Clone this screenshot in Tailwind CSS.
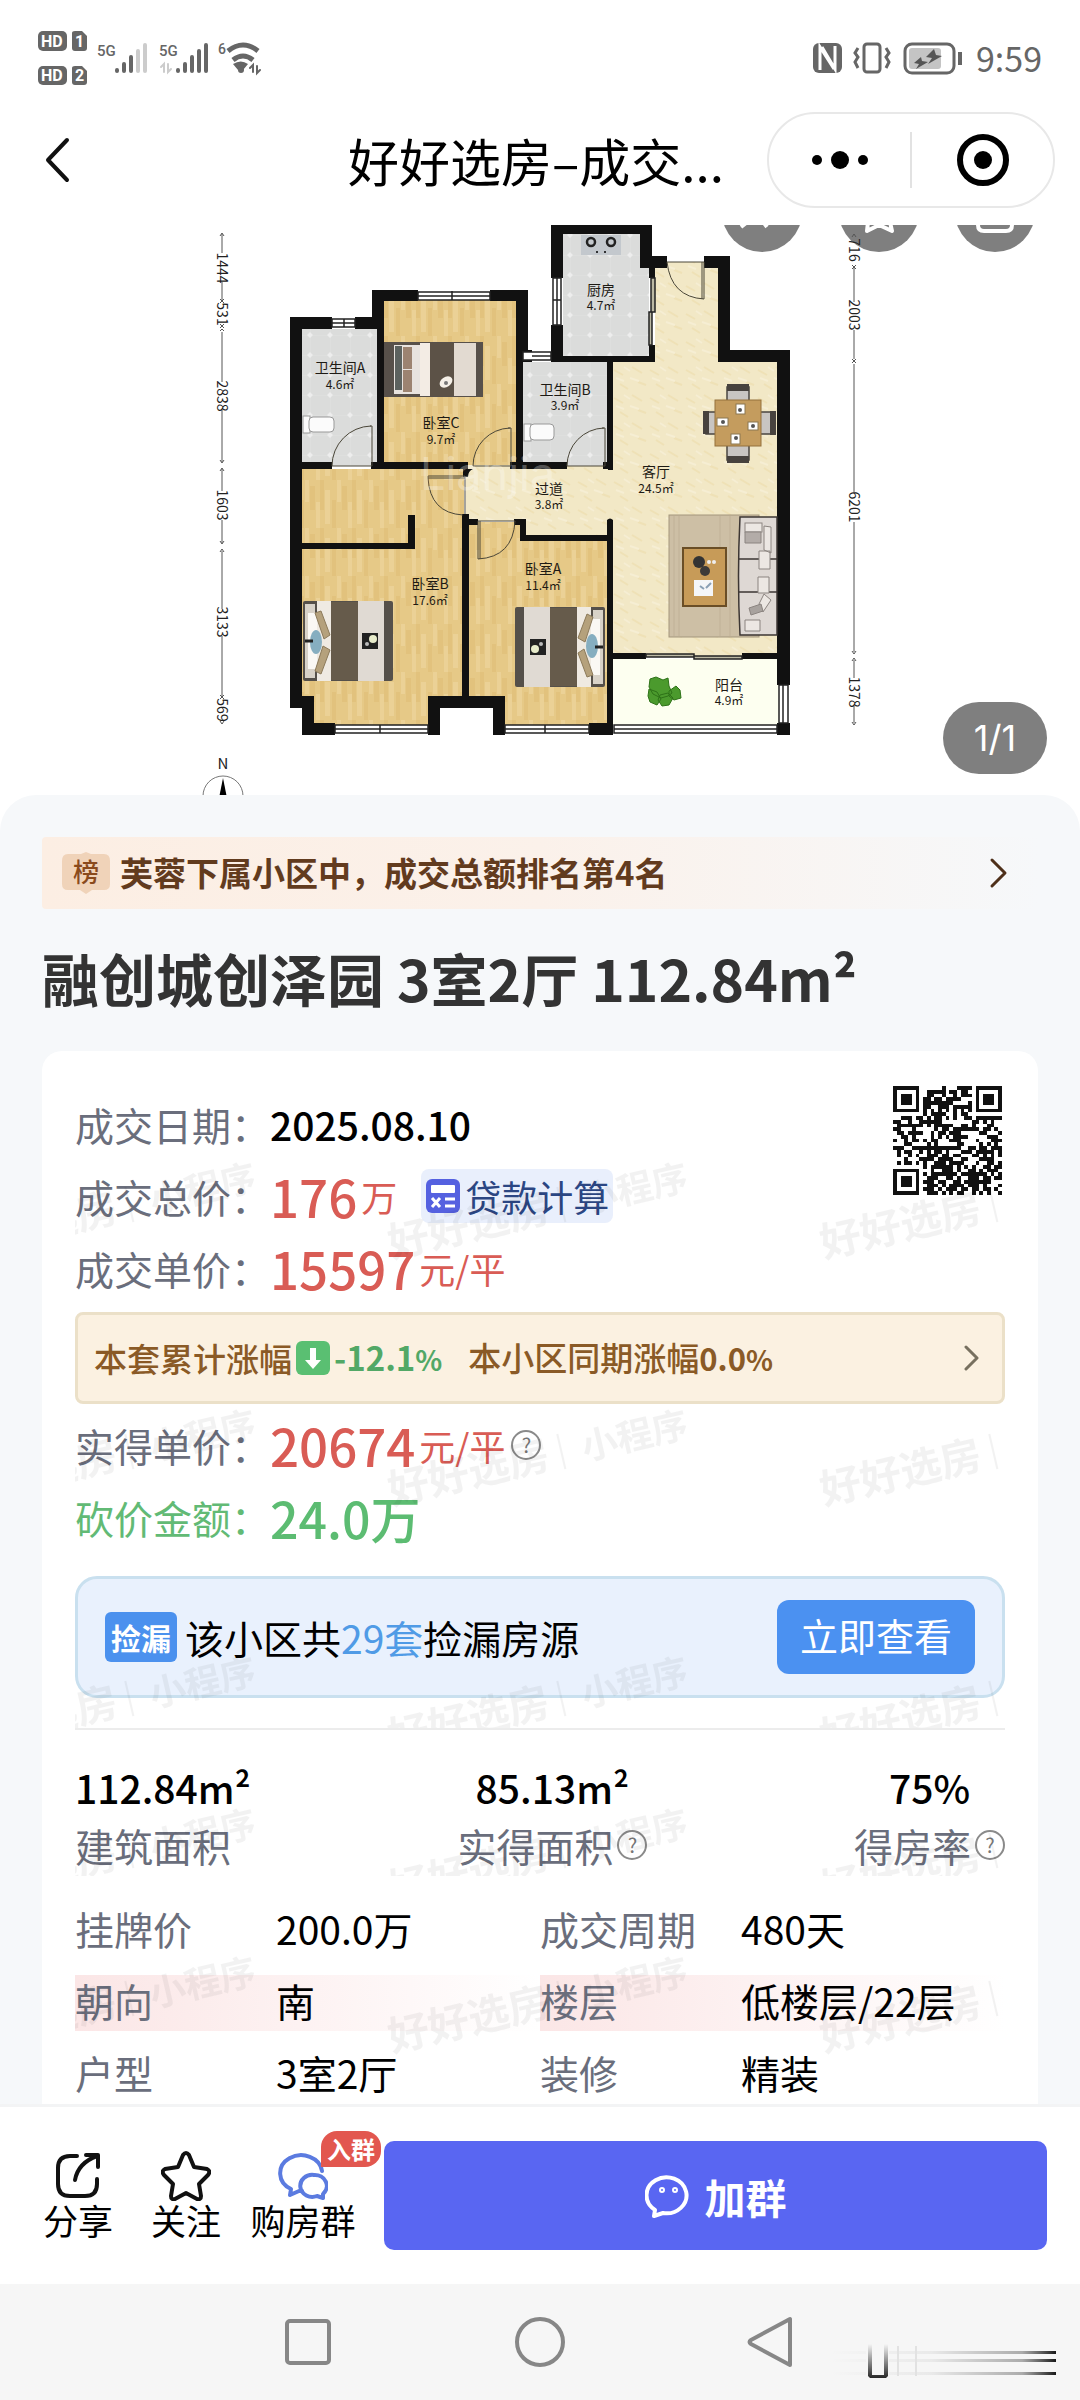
<!DOCTYPE html>
<html lang="zh-CN">
<head>
<meta charset="utf-8">
<meta name="viewport" content="width=device-width, initial-scale=1">
<title>好好选房-成交详情</title>
<script src="https://cdn.jsdelivr.net/npm/@tailwindcss/browser@4"></script>
</head>
<body class="flex h-screen flex-col overflow-hidden bg-white font-['Noto_Sans_CJK_SC',sans-serif] text-black">

<!-- Status bar -->
<div class="flex h-[112px] shrink-0 items-center justify-between px-[38px] pt-1 text-[#666]">
  <svg class="h-[60px] w-[226px]" viewBox="38 28 226 60" fill="#666" aria-hidden="true">
    <g font-family="Roboto, sans-serif" font-weight="700">
      <rect x="38" y="31" width="29" height="20" rx="5"/><path d="M72 33q0-2 3-2h7l5 5v12q0 3-3 3h-9q-3 0-3-3z"/>
      <rect x="38" y="66" width="29" height="19" rx="5"/><path d="M72 68q0-2 3-2h7l5 5v11q0 3-3 3h-9q-3 0-3-3z"/>
      <g fill="#fff" font-size="16"><text x="41" y="47">HD</text><text x="75" y="47">1</text><text x="41" y="81">HD</text><text x="75" y="81">2</text></g>
      <g font-size="15" font-weight="500"><text x="97" y="56">5G</text><text x="159" y="56">5G</text><text x="218" y="54" font-size="14">6</text></g>
    </g>
    <g stroke="#666" stroke-width="4" stroke-linecap="round" fill="none">
      <path d="M117 70v1M124 64v7M131 57v14"/><path stroke="#ccc" d="M138 51v20M145 45v26"/>
      <path d="M178 70v1M185 64v7M192 57v14M199 51v20M206 45v26"/>
      <path stroke="#ccc" stroke-width="2" d="M164 72v-8l-3 3M168 64v8l3-3"/>
      <path stroke-width="5" stroke-linecap="butt" d="M228 51q15-12 30 0M233 60q10-8 20 0"/>
      <path stroke-width="2" d="M253 72v-7l-3 3M257 66v7l3-3"/>
    </g>
    <path d="M233 64q8-5 15 0l-5 6q-2-2-5 0z"/><circle cx="241" cy="70" r="3"/>
  </svg>
  <div class="flex items-center gap-3">
    <svg class="h-[36px] w-[152px]" viewBox="814 40 152 36" fill="none" stroke="#666" aria-hidden="true">
      <rect x="815" y="43" width="29" height="30" rx="6" fill="#666" stroke="none"/>
      <path stroke="#fff" stroke-width="3" d="M822 70V47l14 22M824 47l13 22V46"/>
      <rect x="866" y="44" width="16" height="28" rx="3" stroke-width="3"/>
      <path stroke-width="3" d="M860 48l-3 5 3 4-3 5 3 6M888 48l3 5-3 4 3 5-3 6"/>
      <rect x="907" y="44" width="49" height="29" rx="7" stroke-width="3"/>
      <rect x="911" y="48" width="32" height="21" rx="3" fill="#c4c4c4" stroke="none"/>
      <path stroke-width="4" d="M962 52v13"/>
      <path fill="#555" stroke="none" d="M936 49l-8 8 6 1-4 6 14-8-6-1zM923 57l-7 6 5 1-3 5 12-7-6-1z"/>
    </svg>
    <time class="text-[34px] leading-[36px]">9:59</time>
  </div>
</div>

<!-- Mini-program title bar -->
<header class="flex h-[96px] shrink-0 items-center pr-[25px] pl-[42px]">
  <button class="w-[294px] text-left" aria-label="返回">
    <svg class="h-[52px] w-[32px]" viewBox="0 0 32 52" fill="none" stroke="#111" stroke-width="4" stroke-linecap="round" stroke-linejoin="round"><path d="M25 6L6 26l19 20"/></svg>
  </button>
  <h1 class="min-w-0 flex-1 pl-3 text-[51px] leading-[60px] whitespace-nowrap">好好选房–成交...</h1>
  <div class="flex h-[96px] w-[288px] shrink-0 items-center rounded-full border-2 border-[#e8e8e8]">
    <button class="flex h-14 flex-1 items-center justify-center border-r-2 border-[#e2e2e2]" aria-label="更多">
      <svg class="h-6 w-16" viewBox="0 0 64 24"><circle cx="9" cy="12" r="5"/><circle cx="32" cy="12" r="9"/><circle cx="55" cy="12" r="5"/></svg>
    </button>
    <button class="flex flex-1 items-center justify-center" aria-label="关闭">
      <svg class="h-14 w-14" viewBox="0 0 56 56"><circle cx="28" cy="28" r="23" fill="none" stroke="#000" stroke-width="6"/><circle cx="28" cy="28" r="9"/></svg>
    </button>
  </div>
</header>

<main class="min-h-0 flex-1 overflow-hidden pt-[17px]">

  <!-- Floor plan -->
  <section class="relative h-[570px]" aria-label="户型图">
    <svg class="h-full w-full" viewBox="0 225 1080 570">
      <defs>
        <pattern id="wood" width="32" height="48" patternUnits="userSpaceOnUse">
          <rect width="32" height="48" fill="#e6c987"/>
          <path fill="#e2c27d" d="M0 0h4v30H0zM12 20h4v28h-4zM22 6h5v24h-5z"/>
          <path fill="#ebd196" d="M5 10h5v34H5zM17 0h4v22h-4zM28 22h4v26h-4z"/>
        </pattern>
        <pattern id="tile" x="310" y="335" width="20" height="20" patternUnits="userSpaceOnUse">
          <rect width="20" height="20" fill="#dbdcdb"/><path stroke="#e1e2e1" d="M0 0h20M0 0v20"/>
          <path fill="#ededed" d="M0 0h3L0 3zM20 0v3l-3-3zM0 20v-3l3 3zM20 20h-3l3-3z"/>
        </pattern>
        <pattern id="stone" width="36" height="28" patternUnits="userSpaceOnUse">
          <rect width="36" height="28" fill="#f2e8c6"/>
          <path stroke="#efe1b6" stroke-width="2" fill="none" d="M2 6l9 5M20 3l10 6M8 20l8 5M26 18l8 3"/>
          <path stroke="#f6eed3" stroke-width="2" fill="none" d="M12 3l6 4M4 14l8 3M18 14l9 3"/>
        </pattern>
        <g id="bed">
          <rect width="90" height="80" rx="2" fill="#55504a"/>
          <rect x="2" y="3" width="10" height="74" fill="#d8d2c8"/><rect x="5" y="12" width="9" height="56" fill="#faf8f4"/>
          <rect x="14" width="14" height="80" fill="#efeae2"/>
          <rect x="28" y="1" width="27" height="78" fill="#665b4b"/>
          <rect x="55" width="26" height="80" fill="#e0dad3"/>
          <path fill="#b5a17c" stroke="#8c7a5a" d="M12 12l6-2 9 24-6 4zM12 70l6 3 9-24-7-4z"/>
          <ellipse cx="13" cy="41" rx="6" ry="12" fill="#86aec0"/><path stroke="#222" stroke-width="3" d="M2 40h8"/>
          <rect x="59" y="32" width="16" height="16" fill="#222"/><circle cx="70" cy="38" r="4" fill="#e8eccb"/><circle cx="64" cy="43" r="2" fill="#bbb"/>
        </g>
      </defs>

      <!-- floors -->
      <path fill="url(#stone)" d="M466 462h140v-106h49V262h66v94h60v300H610V541h-90v-20h-54z"/>
      <path fill="url(#wood)" d="M302 469h162v227h-34v35H310v-35h-8zM384 300h132v165H384zM466 522h54v16h90v190H500v-32h-34z"/>
      <path fill="url(#tile)" d="M302 329h75v137h-75zM563 234h77v34h9v88h-86zM523 362h84v104h-84z"/>
      <path fill="#fdfff0" d="M613 659h166v66H613z"/>

      <!-- walls -->
      <g fill="#111">
        <path d="M290 317h42v12h-30v133h30v7h-30v74h106v-28h7v34H302v147h12v27h21v12h-33v-27h-12z"/>
        <path d="M355 317h17v-27h46v11h-34v161h84v7h5q-5 2-5 8h-5v-8h-92v-7h6V329h-22zM490 290h38v60h4v12h-9v100h44v7h-57v-7h6V301h-26z"/>
        <path d="M551 225h101v31h15v12h-12v10h-6v-10h-9v-34h-77v44h-12zM551 325h12v31h86v-11h6v17h-42v108h-5v-1h-5v-7h4V362h-56z"/>
        <path d="M704 256h26v94h60v335h-13V362h-59v-94h-14zM462 514h7v5h9v6h-9v171h36v39h-12v-27h-53v27h-12v-39h34zM514 519h12v16h81v-15q3-3 6 0v133h33v6h-33v76h-24v-12h18V541h-87v-16h-6zM742 653h35v6h-35zM777 723h13v12h-13z"/>
      </g>

      <!-- windows -->
      <g fill="#fff" stroke="#222" stroke-width="1.5">
        <path d="M332 319h23v8h-23zM418 292h72v8h-72zM523 352h28v8h-28zM553 278h8v47h-8zM335 725h93v8h-93zM505 725h84v8h-84zM614 725h163v8H614zM779 685h9v38h-9z"/>
        <path d="M332 323h23M344 319v8M418 296h72M452 291v9M532 356h19M557 278v47M553 300h8M335 729h93M380 725v8M505 729h84M545 725v8M614 729h163M783 685v38"/>
        <path fill="#bcb9a4" d="M651 278h4v34h-4zM649 312h3v33h-3zM646 654h48v3h-48zM694 656h48v3h-48z"/>
      </g>

      <!-- doors -->
      <g fill="none" stroke="#4a4638">
        <path d="M332 466a40 40 0 0 1 39-40M370 426h2v40h-40"/>
        <path d="M473 466a38 38 0 0 1 37-38M508 428h3v38h-38"/>
        <path d="M465 478h-37v-2h37zM428 478q2 35 35 37M465 478v36"/>
        <path d="M567 466a38 38 0 0 1 37-38M602 428h3v38h-38"/>
        <path d="M667 262h37v37M704 299q-33-2-37-37M702 262v37"/>
        <path d="M478 521h37q-2 36-37 38zM480 521v38"/>
      </g>

      <!-- furniture -->
      <g>
        <rect x="384" y="342" width="99" height="55" fill="#57504a"/><rect x="394" y="345" width="26" height="49" fill="#e8e3df"/>
        <rect x="403" y="347" width="9" height="22" fill="#9c8371"/><rect x="403" y="370" width="9" height="22" fill="#9c8371"/><path fill="#5c625f" d="M395 346h7v44h-7z"/>
        <rect x="420" y="343" width="10" height="53" fill="#f3ece4"/><rect x="430" y="343" width="24" height="53" fill="#5c5247"/><rect x="454" y="343" width="22" height="53" fill="#e2dad1"/>
        <ellipse cx="446" cy="382" rx="7" ry="5" fill="#f5f0e8" transform="rotate(-35 446 382)"/><circle cx="446" cy="383" r="2" fill="#777"/>
        <use href="#bed" x="303" y="601"/>
        <use href="#bed" transform="translate(605 687) rotate(180)"/>
        <g fill="#fbfbfb" stroke="#999"><rect x="303" y="416" width="7" height="17"/><rect x="309" y="417" width="25" height="15" rx="4"/><rect x="524" y="424" width="7" height="17"/><rect x="530" y="424" width="24" height="16" rx="4"/></g>
        <rect x="581" y="235" width="40" height="20" fill="#c3c8cd"/>
        <g fill="none" stroke="#222" stroke-width="2.5"><circle cx="591" cy="242" r="4"/><circle cx="611" cy="242" r="4"/></g><circle cx="597" cy="252" r="1"/><circle cx="605" cy="252" r="1"/>
        <g fill="#c8c5c2" stroke="#4a4541" stroke-width="1.5"><rect x="727" y="387" width="22" height="18"/><rect x="727" y="442" width="22" height="18"/><rect x="706" y="412" width="16" height="22"/><rect x="759" y="412" width="16" height="22"/></g>
        <path fill="#47423e" d="M727 384h22v7h-22zM727 456h22v7h-22zM703 411h6v23h-6zM770 411h6v24h-6z"/>
        <rect x="715" y="400" width="46" height="46" fill="#c49c5e" stroke="#94713b"/>
        <g fill="#fff" stroke="#8a7650"><rect x="736" y="404" width="9" height="10"/><rect x="717" y="418" width="11" height="8"/><rect x="748" y="422" width="10" height="8"/><rect x="731" y="434" width="9" height="10"/></g>
        <g fill="#555"><circle cx="740" cy="410" r="2"/><circle cx="723" cy="422" r="2"/><circle cx="753" cy="426" r="2"/><circle cx="736" cy="438" r="2"/></g>
        <rect x="669" y="515" width="90" height="122" fill="#cdbfa5" stroke="#a3967c"/>
        <path stroke="#c0b197" d="M674 516v120M679 516v120M720 516v120M730 516v120"/>
        <rect x="683" y="548" width="43" height="58" fill="#c79b58" stroke="#6a4e26" stroke-width="2"/>
        <circle cx="699" cy="562" r="6" fill="#333"/><circle cx="705" cy="571" r="5" fill="#3c3a38"/><circle cx="709" cy="562" r="2" fill="#eee"/><circle cx="714" cy="562" r="2" fill="#eee"/>
        <rect x="694" y="580" width="19" height="16" fill="#f4f6f8"/><path stroke="#8aa0b5" stroke-width="2" d="M700 586l4 3M706 588l5-5"/>
        <path fill="#ded8d4" stroke="#3c3633" stroke-width="1.5" d="M740 517h37v118h-37q-3-58 0-118zM739 559h38M739 592h38"/>
        <g fill="#ece7e3" stroke="#8b8480"><rect x="745" y="523" width="17" height="9"/><path fill="#b3aca8" d="M745 532h16v11h-16z"/><path d="M764 526l7 1v26l-7-3zM759 551h11v18h-11zM758 577h11v16h-11zM764 594l7 6-8 12-4-8zM745 620h15v11h-15z"/><path fill="#a8a29e" d="M749 608l12-4 2 7-12 4z"/></g>
        <g fill="#4b9a2d" stroke="#2e7218"><path d="M650 679l6-2 7 3 5-2 1 8 3 7-4 3-7 2-8-4-4-7zM649 689l8 3 4 7-4 6-7-3-2-6zM660 695l8-2 5 5-4 7-7 1-4-6zM669 691l7-5 4 4 1 8-7 2-5-4z"/></g>
      </g>

      <text x="420" y="490" font-family="Inter, sans-serif" font-size="45" fill="#fff" fill-opacity=".3">Lianjia</text>

      <!-- room names -->
      <g text-anchor="middle" fill="#1d1a14" font-size="14">
        <text x="340" y="373">卫生间A</text><text x="441" y="428">卧室C</text><text x="601" y="295">厨房</text><text x="565" y="395">卫生间B</text>
        <text x="656" y="477">客厅</text><text x="549" y="494">过道</text><text x="430" y="589">卧室B</text><text x="543" y="574">卧室A</text><text x="729" y="690">阳台</text>
        <g font-size="12"><text x="340" y="389">4.6㎡</text><text x="441" y="444">9.7㎡</text><text x="601" y="310">4.7㎡</text><text x="565" y="410">3.9㎡</text><text x="656" y="493">24.5㎡</text><text x="549" y="509">3.8㎡</text><text x="430" y="605">17.6㎡</text><text x="543" y="590">11.4㎡</text><text x="729" y="705">4.9㎡</text></g>
      </g>

      <!-- buttons scrolled under the title bar -->
      <g fill="#7f7f7f"><circle cx="762" cy="212" r="40"/><circle cx="879" cy="212" r="40"/><circle cx="995" cy="212" r="40"/></g>
      <g fill="none" stroke="#fff" stroke-width="4" stroke-linejoin="round"><path d="M741 227l5-4M764 223l3 4M868 222l-1 9 12-6 13 6-2-9"/><path d="M978 222v3q0 6 6 6h22q6 0 6-6v-3"/></g>

      <!-- dimensions -->
      <g fill="none" stroke="#555"><path d="M222 234v19M222 282v18M222 332v50M222 410v52M222 469v22M222 520v23M222 551v58M222 636v60M854 267v35M854 330v29M854 364v128M854 522v130M854 660v18M854 706v17"/><path d="M220 236l2-3 2 3M220 299l4 4M224 299l-4 4M220 324l4 4M224 324l-4 4M220 331l2-2 2 2M220 460l2 3 2-3M220 471l2-3 2 3M220 541l2 3 2-3M220 552l2-3 2 3M220 695l4 4M224 695l-4 4M220 721l2 3 2-3M852 237l2-3 2 3M852 265l4 4M856 265l-4 4M852 359l4 4M856 359l-4 4M852 651l2 3 2-3M852 661l2-3 2 3M852 722l2 3 2-3"/></g>
      <g font-size="14" text-anchor="middle" fill="#222">
        <text transform="translate(217 268) rotate(90)">1444</text><text transform="translate(217 314) rotate(90)">531</text><text transform="translate(217 396) rotate(90)">2838</text><text transform="translate(217 505) rotate(90)">1603</text><text transform="translate(217 622) rotate(90)">3133</text><text transform="translate(217 710) rotate(90)">569</text>
        <text transform="translate(849 250) rotate(90)">716</text><text transform="translate(849 315) rotate(90)">2003</text><text transform="translate(849 507) rotate(90)">6201</text><text transform="translate(849 692) rotate(90)">1378</text>
        <text x="223" y="769" font-size="15">N</text>
      </g>
      <circle cx="223" cy="796" r="20" fill="none" stroke="#777"/><path d="M223 778l-4 20h8z"/>
    </svg>
    <span class="absolute right-[33px] bottom-[21px] flex h-[72px] w-[104px] items-center justify-center rounded-full bg-[#7f7f7f] font-['Inter',sans-serif] text-[36px] leading-none text-white">1/1</span>
  </section>

  <!-- Detail sheet -->
  <section class="rounded-t-[36px] bg-[#f6f8fa] px-[42px] pt-[42px]">
    <a href="#rank" class="flex h-[72px] items-center rounded-sm bg-linear-to-r from-[#fceee3] via-[#fbf1ea] to-[#f6f8fa] pr-[30px] pl-5 text-[33px] font-bold text-[#623b1e]">
      <svg class="mr-[10px] h-[42px] w-12 shrink-0" viewBox="0 0 48 42" aria-hidden="true"><path fill="#f0d3b9" d="M24 0l5 2h13q6 0 6 7v23q0 6-6 6H30l-6 4-6-4H6q-6 0-6-6V9q0-7 6-7h13z"/><text x="24" y="30" text-anchor="middle" font-size="26" font-weight="500" fill="#8a4a1c">榜</text></svg>
      <span class="flex-1">芙蓉下属小区中，成交总额排名第4名</span>
      <svg class="h-8 w-5" viewBox="0 0 20 32" fill="none" stroke="#4e301a" stroke-width="3" stroke-linecap="round" stroke-linejoin="round"><path d="M4 3l13 13L4 29"/></svg>
    </a>
    <h2 class="mt-7 text-[57px] leading-[80px] font-bold text-[#333]">融创城创泽园 3室2厅 112.84m²</h2>

    <div class="mt-[34px] rounded-t-[20px] bg-white px-[33px] pt-[39px] text-[39px] leading-[56px]">

      <!-- Price -->
      <div class="relative border-b-2 border-[#ececec] pb-[30px]">
        <div class="flex items-start justify-between">
          <dl class="grid grid-cols-[195px_auto]">
            <dt class="flex h-[72px] items-center pb-1 text-[#6a6e7c]">成交日期：</dt>
            <dd class="flex h-[72px] items-center pb-1 font-medium">2025.08.10</dd>
            <dt class="flex h-[72px] items-center pb-1 text-[#6a6e7c]">成交总价：</dt>
            <dd class="flex h-[72px] items-center pb-1 text-[#d95c55]"><span class="text-[51px] font-medium">176</span><span class="ml-1 text-[36px]">万</span>
              <button class="ml-6 flex h-[54px] items-center gap-1 rounded-lg bg-[#e9effc] px-1 text-[36px] text-[#2b4683]">
                <svg class="h-9 w-9" viewBox="0 0 36 36" aria-hidden="true"><rect x="1" y="1" width="34" height="34" rx="6" fill="#5561e0"/><rect x="6" y="7" width="24" height="8" rx="1" fill="#fff"/><path stroke="#fff" stroke-width="3" d="M7 20l8 9M15 20l-8 9M20 21h10M20 28h10"/></svg>贷款计算</button>
            </dd>
            <dt class="flex h-[72px] items-center pb-1 text-[#6a6e7c]">成交单价：</dt>
            <dd class="flex h-[72px] items-center pb-1 text-[#d95c55]"><span class="text-[51px] font-medium">15597</span><span class="ml-1 text-[36px]">元/平</span></dd>
          </dl>
          <svg id="qr" class="-mt-1 mr-[3px] h-[109px] w-[109px]" viewBox="0 0 29 29" shape-rendering="crispEdges" role="img" aria-label="小程序码"><path fill="#111"/></svg>
        </div>

        <a href="#trend" class="mt-[6px] flex h-[92px] items-center rounded-lg border-3 border-[#ebe0c8] bg-[#fbf1e1] pr-[22px] pl-4 text-[33px] font-medium text-[#8a5a26]">
          本套累计涨幅<svg class="mx-1 h-[34px] w-[34px]" viewBox="0 0 34 34" aria-hidden="true"><rect width="34" height="34" rx="6" fill="#5abf72"/><path fill="#fff" d="M14 7h6v12h5l-8 9-8-9h5z"/></svg>
          <strong class="font-bold text-[#52a866]">-12.1<span class="text-[28px]">%</span></strong>
          <span class="ml-[26px] flex-1">本小区同期涨幅<strong class="text-[31px] font-bold">0.0<span class="text-[28px]">%</span></strong></span>
          <svg class="h-[26px] w-4" viewBox="0 0 16 26" fill="none" stroke="#77705f" stroke-width="3" stroke-linecap="round" stroke-linejoin="round"><path d="M2 2l11 11L2 24"/></svg>
        </a>

        <dl class="mt-[7px] grid grid-cols-[195px_auto]">
          <dt class="flex h-[72px] items-center pb-1 text-[#6a6e7c]">实得单价：</dt>
          <dd class="flex h-[72px] items-center pb-1 text-[#d95c55]"><span class="text-[51px] font-medium">20674</span><span class="ml-1 text-[36px]">元/平</span>
            <button class="ml-[6px] flex h-[30px] w-[30px] items-center justify-center rounded-full border-2 border-[#8a8a8a] text-[20px] leading-none text-[#777]" aria-label="实得单价说明">?</button></dd>
          <dt class="flex h-[72px] items-center pb-1 text-[#62ba75]">砍价金额：</dt>
          <dd class="flex h-[72px] items-center pb-1 text-[50px] font-medium text-[#5cbc72]">24.0万</dd>
        </dl>

        <div class="mt-[21px] flex h-[122px] items-center rounded-[22px] border-3 border-[#c9e0ef] bg-[#e9f1fd] px-[27px]">
          <span class="flex h-[50px] w-[72px] items-center justify-center rounded-md bg-[#4b91ee] text-[30px] font-bold text-white">捡漏</span>
          <span class="ml-2 flex-1">该小区共<span class="text-[#509be6]">29套</span>捡漏房源</span>
          <button class="relative z-10 flex h-[74px] w-[198px] items-center justify-center rounded-xl bg-[#4b91f1] pb-1 text-[38px] text-white">立即查看</button>
        </div>
        <svg class="pointer-events-none absolute inset-0 h-full w-full" aria-hidden="true">
          <defs>
            <pattern id="stamp" width="432" height="247" patternUnits="userSpaceOnUse">
              <g fill="#000" fill-opacity=".05" font-weight="700" font-size="41">
                <g id="mark" transform="translate(317 168) rotate(-13)"><text>好好选房</text><path d="M176-32h2V4h-2z"/><text x="198" font-size="36">小程序</text></g>
                <use href="#mark" x="-432"/>
              </g>
            </pattern>
          </defs>
          <rect width="100%" height="100%" fill="url(#stamp)"/>
        </svg>
      </div>

      <!-- Area -->
      <dl class="relative mt-[6px] flex justify-between pt-[21px] pb-[3px]">
        <div class="flex flex-col"><dd class="order-1 h-[60px] leading-[60px] font-medium">112.84m²</dd><dt class="order-2 text-[#6a6e7c]">建筑面积</dt></div>
        <div class="flex flex-col items-center"><dd class="order-1 h-[60px] leading-[60px] font-medium">85.13m²</dd><dt class="order-2 flex items-center gap-1 text-[#6a6e7c]">实得面积<button class="flex h-[30px] w-[30px] items-center justify-center rounded-full border-2 border-[#8a8a8a] text-[20px] leading-none text-[#777]" aria-label="实得面积说明">?</button></dt></div>
        <div class="flex flex-col items-center"><dd class="order-1 h-[60px] leading-[60px] font-medium">75%</dd><dt class="order-2 flex items-center gap-1 text-[#6a6e7c]">得房率<button class="flex h-[30px] w-[30px] items-center justify-center rounded-full border-2 border-[#8a8a8a] text-[20px] leading-none text-[#777]" aria-label="得房率说明">?</button></dt></div>
        <svg class="pointer-events-none absolute inset-0 h-full w-full" aria-hidden="true"><rect width="100%" height="100%" fill="url(#stamp)"/></svg>
      </dl>

      <!-- Attributes -->
      <dl class="relative mt-2 grid grid-cols-2 gap-y-4 pt-[19px] pb-2 leading-[50px]">
        <div class="flex h-14"><dt class="w-[201px] text-[#6a6e7c]">挂牌价</dt><dd>200.0万</dd></div>
        <div class="flex h-14"><dt class="w-[201px] text-[#6a6e7c]">成交周期</dt><dd>480天</dd></div>
        <div class="flex h-14 bg-linear-to-r from-[#fbe6e6] to-white"><dt class="w-[201px] text-[#6a6e7c]">朝向</dt><dd>南</dd></div>
        <div class="flex h-14 bg-linear-to-r from-[#fbe6e6] to-white"><dt class="w-[201px] text-[#6a6e7c]">楼层</dt><dd>低楼层/22层</dd></div>
        <div class="flex h-14"><dt class="w-[201px] text-[#6a6e7c]">户型</dt><dd>3室2厅</dd></div>
        <div class="flex h-14"><dt class="w-[201px] text-[#6a6e7c]">装修</dt><dd>精装</dd></div>
        <svg class="pointer-events-none absolute inset-0 h-full w-full" aria-hidden="true"><rect width="100%" height="100%" fill="url(#stamp)"/></svg>
      </dl>
    </div>
  </section>
</main>

<!-- Action bar -->
<footer class="flex h-[180px] shrink-0 items-start border-t-3 border-[#f3f4f5] bg-white pr-[33px] pl-[42px] text-[35px] leading-[38px]">
  <button class="flex w-[72px] flex-col items-center pt-11">
    <svg class="h-[50px] w-[50px]" viewBox="0 0 50 50" fill="none" stroke="#111" stroke-width="4" stroke-linecap="round" stroke-linejoin="round"><path d="M24 5h-7Q5 5 5 17v16q0 12 12 12h15q12 0 12-12v-5M33 4h12v12M44 5Q25 12 22 29"/></svg>
    <span class="whitespace-nowrap">分享</span>
  </button>
  <button class="ml-9 flex w-[72px] flex-col items-center pt-11">
    <svg class="h-[50px] w-[50px]" viewBox="0 0 50 50" fill="none" stroke="#111" stroke-width="4" stroke-linejoin="round"><path d="M22 4q3-4 6 0l5 12 13 2q4 2 1 6l-9 9 2 12q0 4-4 3l-11-6-11 6q-4 1-4-3l2-12-9-9q-3-4 1-6l13-2z"/></svg>
    <span class="whitespace-nowrap">关注</span>
  </button>
  <button class="relative ml-7 flex w-[106px] flex-col items-center pt-11">
    <svg class="h-[50px] w-[50px]" viewBox="0 0 50 50" fill="none" stroke="#5b7be0" stroke-width="4" stroke-linecap="round" stroke-linejoin="round"><path d="M44 20A21 18 0 1 0 13 38l-1 6 9-4h3"/><path d="M36 24a12 11 0 1 0 3 21l6 2v-4a12 11 0 0 0-9-19z"/></svg>
    <span class="whitespace-nowrap">购房群</span>
    <span class="absolute top-[24px] -right-[25px] flex h-9 w-[60px] items-center justify-center rounded-[16px] rounded-bl-none bg-[#e2574f] text-[24px] leading-none font-bold text-white">入群</span>
  </button>
  <button class="mt-[34px] ml-7 flex h-[109px] flex-1 items-center justify-center gap-[14px] rounded-[10px] bg-[#5966f2] text-[41px] font-bold text-white">
    <svg class="h-11 w-[46px]" viewBox="0 0 46 44" fill="none" stroke="#fff" stroke-width="4" stroke-linejoin="round"><path d="M10 36l-1 6 9-3A20 18 0 1 0 10 36z"/><circle cx="17" cy="16" r="1"/><circle cx="30" cy="16" r="1"/></svg>
    加群
  </button>
</footer>

<!-- System navigation -->
<nav class="relative flex h-[116px] shrink-0 items-center justify-center gap-[180px] bg-[#f6f6f6]">
  <button aria-label="最近任务"><svg class="h-[52px] w-[52px]" viewBox="0 0 52 52" fill="none" stroke="#878787" stroke-width="4"><rect x="5" y="5" width="42" height="42" rx="3"/></svg></button>
  <button aria-label="主页"><svg class="h-[52px] w-[52px]" viewBox="0 0 52 52" fill="none" stroke="#878787" stroke-width="4"><circle cx="26" cy="26" r="23"/></svg></button>
  <button aria-label="返回"><svg class="h-[52px] w-[52px]" viewBox="0 0 52 52" fill="none" stroke="#878787" stroke-width="4" stroke-linejoin="round"><path d="M44 3v46L5 28q-3-2 0-4z"/></svg></button>
  <svg class="absolute right-[24px] bottom-[20px] h-[40px] w-[226px]" viewBox="0 0 226 40" aria-hidden="true">
    <defs><linearGradient id="streak"><stop offset="0" stop-color="#222" stop-opacity="0"/><stop offset=".45" stop-color="#222" stop-opacity=".06"/><stop offset=".85" stop-color="#222" stop-opacity=".35"/><stop offset="1" stop-color="#000" stop-opacity=".9"/></linearGradient>
    <linearGradient id="tube" x2="0" y2="1"><stop offset="0" stop-color="#111" stop-opacity="0"/><stop offset="1" stop-color="#111" stop-opacity=".9"/></linearGradient></defs>
    <g fill="url(#streak)"><path d="M0 11h226v3H0zM0 19h226v3H0zM0 32h226v3H0z"/></g>
    <rect x="36" y="3" width="23" height="35" fill="#f6f6f6"/><path fill="url(#tube)" d="M38 4h4v31h12V4h4v32l-2 2H40l-2-2z"/><path stroke="#e2e2e2" stroke-width="2" d="M68 6v30M86 6v30"/>
  </svg>
</nav>

<script>
  // Module matrix of the share code: three finders, a timing pattern and data cells.
  const n = 29;
  let seed = 20250810, d = '';
  const rnd = () => (seed = (seed * 1103515245 + 12345) % 2147483648) / 2147483648;
  const finder = (x, y) => {
    for (const [ox, oy] of [[0, 0], [n - 7, 0], [0, n - 7]]) {
      const i = x - ox, j = y - oy;
      if (i >= -1 && i <= 7 && j >= -1 && j <= 7) {
        const r = Math.max(Math.abs(i - 3), Math.abs(j - 3));
        return r === 3 || r <= 1 ? 1 : 0;
      }
    }
    return -1;
  };
  for (let y = 0; y < n; y++) for (let x = 0; x < n; x++) {
    const f = finder(x, y);
    const on = f >= 0 ? f : (x === 6 || y === 6) ? (x + y) % 2 === 0 : rnd() < 0.55;
    if (on) d += `M${x} ${y}h1v1h-1z`;
  }
  document.querySelector('#qr path').setAttribute('d', d);
</script>
</body>
</html>
